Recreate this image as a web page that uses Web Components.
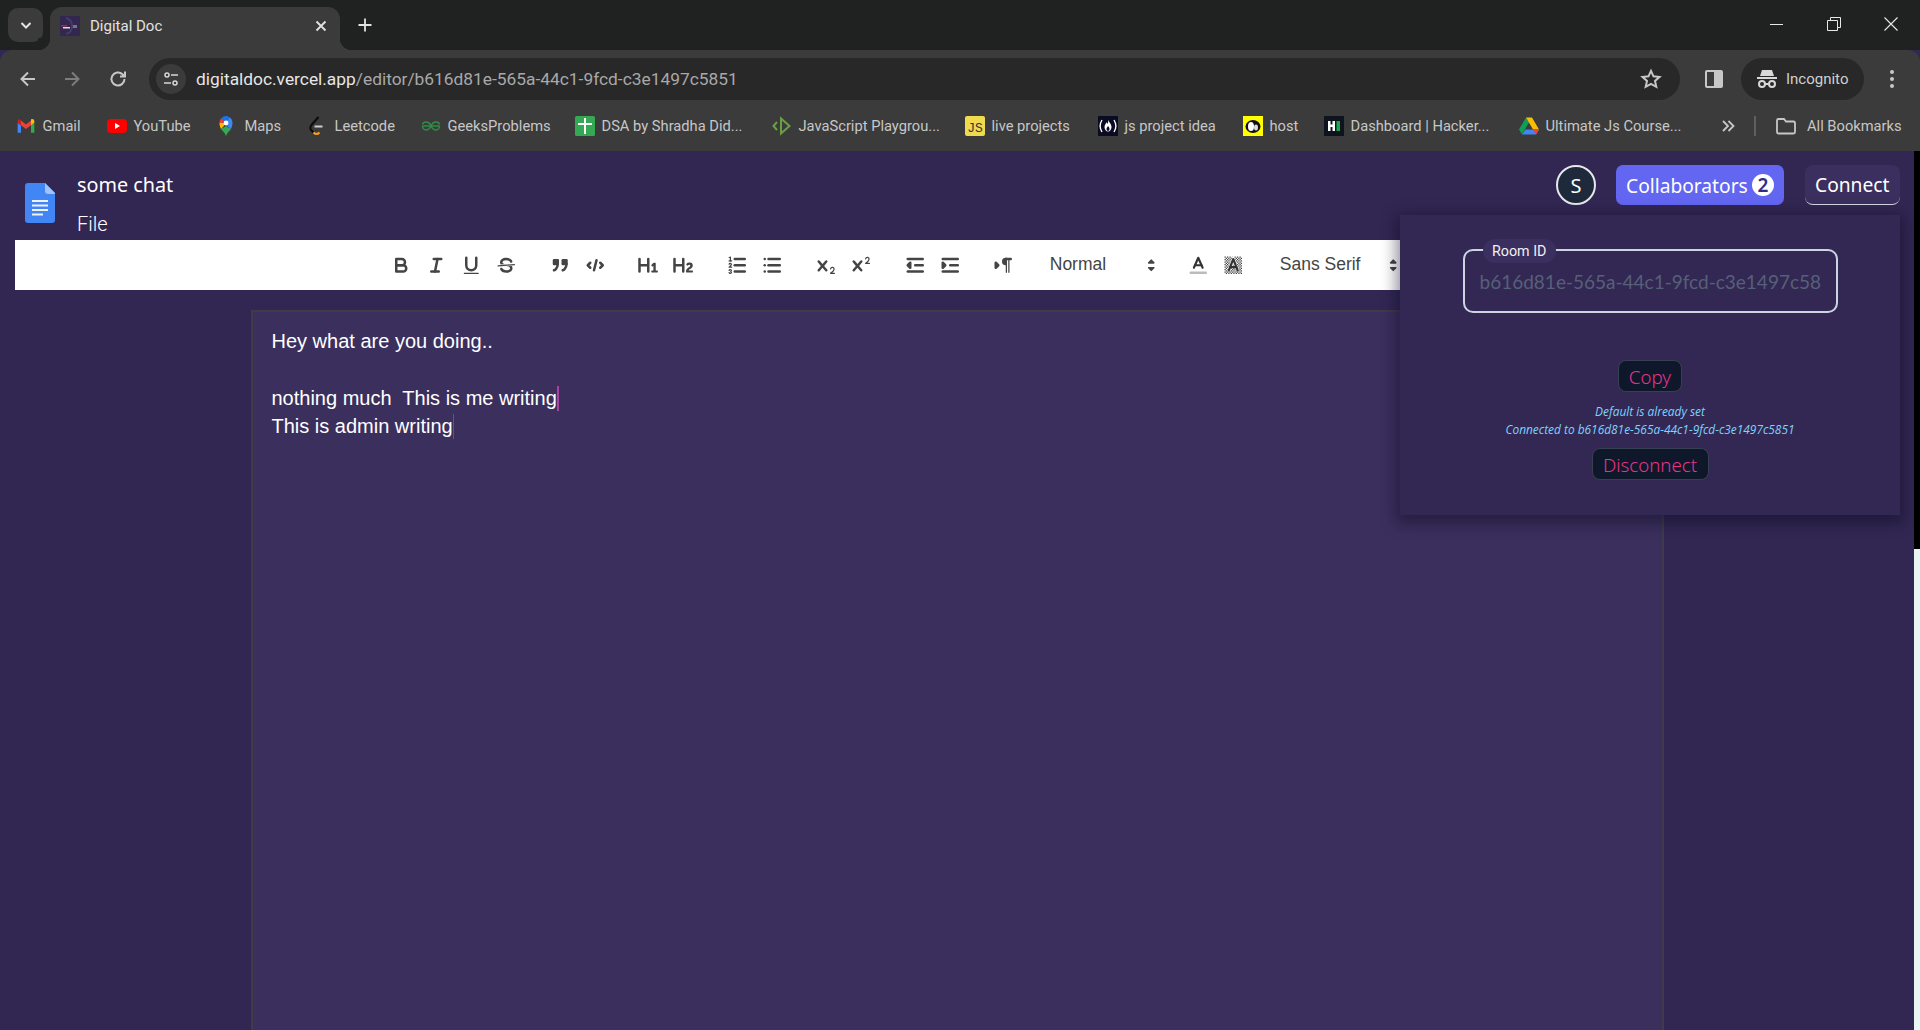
<!DOCTYPE html>
<html lang="en">
<head>
<meta charset="utf-8">
<title>Digital Doc</title>
<style>
  html, body { margin: 0; height: 100%; overflow: hidden; background: #322753; }
  body { display: flex; flex-direction: column; font-family: Roboto, "Liberation Sans", sans-serif; }
</style>
</head>
<body>
<browser-tabs></browser-tabs>
<browser-bar url-host="digitaldoc.vercel.app" url-path="/editor/b616d81e-565a-44c1-9fcd-c3e1497c5851"></browser-bar>
<bookmark-bar>
  <bookmark-item w="91"><svg slot="icon" viewBox="0 0 24 24" width="20" height="20"><path fill="#4285f4" d="M2 20h4v-9L2 8z"/><path fill="#34a853" d="M18 20h4V8l-4 3z"/><path fill="#fbbc04" d="M18 6v5l4-3V6.300c0-2.300-2.500-3.300-4-2.100z"/><path fill="#ea4335" d="M6 11V5.500l6 4.700 6-4.700V11l-6 4.700z"/><path fill="#c5221f" d="M2 6.300V8l4 3V5.500l-1-1.200C3.700 3.200 2 4.200 2 6.300z"/></svg>Gmail</bookmark-item>
  <bookmark-item w="111"><svg slot="icon" viewBox="0 0 20 20" width="20" height="20"><rect x="0" y="3" width="20" height="14" rx="4" fill="#f00"/><path fill="#fff" d="M8 7l5 3-5 3z"/></svg>YouTube</bookmark-item>
  <bookmark-item w="90"><svg slot="icon" viewBox="2 0 20 20" width="20" height="20"><path fill="#34a853" d="M5 13c2 2.500 4 4 5 7 1-3 3-4.500 5-7l-5-3z"/><path fill="#fbbc04" d="M3.500 7c0 2.500.7 4 1.500 6l5.500-6z"/><path fill="#ea4335" d="M5 2.500C4 3.700 3.500 5.300 3.500 7l3.200 0L9 5z"/><path fill="#1a73e8" d="M5 2.500C6.200 1 8 0 10 0c1.500 0 3 .6 4 1.500L9 6z"/><path fill="#4285f4" d="M14 1.500c1.600 1.300 2.500 3.300 2.500 5.500 0 2.300-.7 4-1.500 6L8 7.500z"/><circle cx="10" cy="7" r="2.400" fill="#fff"/></svg>Maps</bookmark-item>
  <bookmark-item w="113"><svg slot="icon" viewBox="1.500 0 20 20" width="20" height="20"><path fill="none" stroke="#0b0b0b" stroke-width="2" d="M12 1L5 9c-1.500 2 -1.500 4 0 5.500l2 2"/><path fill="none" stroke="#f89f1b" stroke-width="2" d="M7 16.500c1.800 1.800 4.200 1.800 6 0"/><path fill="none" stroke="#cfcfcf" stroke-width="2" d="M8 10.500h8"/></svg>Leetcode</bookmark-item>
  <bookmark-item w="154"><svg slot="icon" viewBox="0 0 20 20" width="20" height="20"><g fill="none" stroke="#2f8d46" stroke-width="1.500"><path d="M1.500 10h17"/><path d="M10 10C9 7.500 7 6 5 6 3 6 1.800 7.200 1.500 8.500"/><path d="M10 10c1-2.500 3-4 5-4 2 0 3.200 1.200 3.500 2.500"/><path d="M1.500 10c0 2.200 1.500 4 3.500 4 2 0 3.500-1 5-4"/><path d="M18.500 10c0 2.200-1.500 4-3.500 4-2 0-3.500-1-5-4"/></g></svg>GeeksProblems</bookmark-item>
  <bookmark-item w="197"><svg slot="icon" viewBox="0 0 20 20" width="20" height="20"><rect width="20" height="20" rx="1.500" fill="#34a853"/><path fill="#fff" d="M9 2h2v5h6v2h-6v9H9V9H3V7h6z"/></svg>DSA by Shradha Did...</bookmark-item>
  <bookmark-item w="193"><svg slot="icon" viewBox="0 0 20 20" width="20" height="20"><g fill="none" stroke="#6a9f45" stroke-width="2"><path d="M5 6L1.500 10 5 14"/><path d="M9 2.500L17.500 10 9 17.500z"/></g></svg>JavaScript Playgrou...</bookmark-item>
  <bookmark-item w="133"><svg slot="icon" viewBox="0 0 20 20" width="20" height="20"><rect width="20" height="20" rx="2" fill="#f0db4f"/><text x="10" y="15.500" text-anchor="middle" font-family="Liberation Mono" font-size="13" fill="#323330">JS</text></svg>live projects</bookmark-item>
  <bookmark-item w="145"><svg slot="icon" viewBox="0 0 20 20" width="20" height="20"><rect width="20" height="20" fill="#0a0a23"/><g fill="none" stroke="#fff" stroke-width="1.400"><path d="M4 4C1.800 7.500 1.800 12.500 4 16"/><path d="M16 4c2.200 3.500 2.200 8.500 0 12"/></g><path fill="#fff" d="M10 3.500c.3 2.200 3.500 4 3.500 7.500 0 2.500-1.700 4.500-3.500 4.500s-3.500-2-3.500-4.500c0-2.500 1.700-3.200 2-4.800.5.500 1 1 .9 1.800C10.200 7 10.300 5.500 10 3.500z"/><path fill="#0a0a23" d="M10 10c1 1 1.500 2 1.500 3s-.8 2-1.500 2-1.500-1-1.500-2 1-2 1.500-3z"/></svg>js project idea</bookmark-item>
  <bookmark-item w="81"><svg slot="icon" viewBox="0 0 20 20" width="20" height="20"><rect width="20" height="20" fill="#ff0"/><ellipse cx="10" cy="10.500" rx="7.500" ry="6.500" fill="#111"/><ellipse cx="8" cy="10.500" rx="3" ry="4.500" fill="#fff"/><ellipse cx="13" cy="11.500" rx="2" ry="3" fill="#ddd"/></svg>host</bookmark-item>
  <bookmark-item w="195"><svg slot="icon" viewBox="0 0 20 20" width="20" height="20"><rect width="20" height="20" fill="#0e141e"/><path fill="#fff" d="M4 5h2.500v3.500h2V5H11v10H8.500v-4h-2v4H4z"/><rect x="12.500" y="5" width="3.500" height="10" fill="#1ba94c"/></svg>Dashboard | Hacker...</bookmark-item>
  <bookmark-item w="201"><svg slot="icon" viewBox="0 0 20 20" width="20" height="20"><path fill="#0f9d58" d="M7 1.500L0 13.500l3 5 7-12z"/><path fill="#fbbc04" d="M7 1.500h6l7 12h-6z"/><path fill="#4285f4" d="M3 18.500h14l3-5H6.500z"/><path fill="#ea4335" d="M17 18.500l3-5h-6z"/></svg>Ultimate Js Course...</bookmark-item>
  <bookmark-end></bookmark-end>
</bookmark-bar>
<app-shell>
  <doc-header title-text="some chat"></doc-header>
  <quill-bar></quill-bar>
  <doc-editor>
    <div>Hey what are you doing..</div>
    <div>&nbsp;</div>
    <div>nothing much&nbsp; This is me writing<remote-caret color="#a9419f"></remote-caret></div>
    <div>This is admin writing<remote-caret color="#1f6f9f" thin></remote-caret></div>
  </doc-editor>
  <room-panel room="b616d81e-565a-44c1-9fcd-c3e1497c5851"></room-panel>
</app-shell>

<script>
// the speckled box behind the background-colour icon, same 1x1 checker quill draws
let bgSquares = '';
for (let y = 2; y < 16; y++) {
  for (let x = 2; x < 16; x++) {
    if ((x + y) % 2 === 0) bgSquares += `<rect class="f" x="${x}" y="${y}" width="1" height="1"/>`;
  }
}

// quill's snow icons, 18x18 viewbox. keyed by toolbar button name
const QL_ICONS = {
  bold: '<path class="s" d="M5,4H9.5A2.5,2.5,0,0,1,12,6.5v0A2.5,2.5,0,0,1,9.5,9H5A0,0,0,0,1,5,9V4A0,0,0,0,1,5,4Z"/><path class="s" d="M5,9h5.5A2.5,2.5,0,0,1,13,11.5v0A2.500,2.500,0,0,1,10.500,14H5a0,0,0,0,1,0,0V9A0,0,0,0,1,5,9Z"/>',
  italic: '<line class="s" x1="7" x2="13" y1="4" y2="4"/><line class="s" x1="5" x2="11" y1="14" y2="14"/><line class="s" x1="8" x2="10" y1="14" y2="4"/>',
  underline: '<path class="s" d="M5,3V9a4.012,4.012,0,0,0,4,4H9a4.012,4.012,0,0,0,4-4V3"/><rect class="f" height="1" rx=".5" ry=".5" width="12" x="3" y="15"/>',
  strike: '<line class="s t" x1="15.5" x2="2.5" y1="8.5" y2="9.5"/><path class="f" d="M9.007,8C6.542,7.791,6,7.519,6,6.5,6,5.792,7.283,5,9,5c1.571,0,2.765.679,2.969,1.309a1,1,0,0,0,1.900-.617C13.356,4.106,11.354,3,9,3,6.200,3,4,4.538,4,6.500a3.200,3.200,0,0,0,.5,1.843Z"/><path class="f" d="M8.984,10C11.457,10.208,12,10.479,12,11.500c0,.708-1.283,1.500-3,1.500-1.571,0-2.765-.679-2.969-1.309a1,1,0,1,0-1.900.617C4.644,13.894,6.646,15,9,15c2.800,0,5-1.538,5-3.500a3.200,3.200,0,0,0-.5-1.843Z"/>',
  quote: '<rect class="f s" height="3" width="3" x="4" y="5"/><rect class="f s" height="3" width="3" x="11" y="5"/><path class="f s" fill-rule="evenodd" d="M7,8c0,4.031-3,5-3,5"/><path class="f s" fill-rule="evenodd" d="M14,8c0,4.031-3,5-3,5"/>',
  code: '<polyline class="s" points="5 7 3 9 5 11"/><polyline class="s" points="13 7 15 9 13 11"/><line class="s" x1="10" x2="8" y1="5" y2="13"/>',
  h1: '<path class="f" d="M10,4V14a1,1,0,0,1-2,0V10H3v4a1,1,0,0,1-2,0V4A1,1,0,0,1,3,4V8H8V4a1,1,0,0,1,2,0Zm6.06787,9.209H14.98975V7.59863a.54085.54085,0,0,0-.605-.60547h-.62744a1.01119,1.01119,0,0,0-.748.29688L11.645,8.56641a.5435.5435,0,0,0-.022.8584l.28613.30762a.53861.53861,0,0,0,.84717.0332l.09912-.08789a1.2137,1.2137,0,0,0,.2417-.35254h.02246s-.01123.30859-.01123.60547V13.209H12.041a.54085.54085,0,0,0-.605.60547v.43945a.54085.54085,0,0,0,.605.60547h4.02686a.54085.54085,0,0,0,.605-.60547v-.43945A.54085.54085,0,0,0,16.06787,13.209Z"/>',
  h2: '<path class="f" d="M16.73975,13.81445v.43945a.54085.54085,0,0,1-.605.60547H11.855a.58392.58392,0,0,1-.64893-.60547V14.0127c0-2.90527,3.39941-3.42187,3.39941-4.55469a.77675.77675,0,0,0-.84717-.78125,1.17684,1.17684,0,0,0-.83594.38477c-.2749.26367-.561.374-.85791.13184l-.4292-.34082c-.30811-.24219-.38525-.51758-.1543-.81445a2.97155,2.97155,0,0,1,2.45361-1.17676,2.45393,2.45393,0,0,1,2.68408,2.40918c0,2.45312-3.1792,2.92676-3.27832,3.93848h2.79443A.54085.54085,0,0,1,16.73975,13.81445ZM9,3A.99974.99974,0,0,0,8,4V8H3V4A1,1,0,0,0,1,4V14a1,1,0,0,0,2,0V10H8v4a1,1,0,0,0,2,0V4A.99974.99974,0,0,0,9,3Z"/>',
  ol: '<line class="s" x1="7" x2="15" y1="4" y2="4"/><line class="s" x1="7" x2="15" y1="9" y2="9"/><line class="s" x1="7" x2="15" y1="14" y2="14"/><line class="s t" x1="2.5" x2="4.5" y1="5.5" y2="5.5"/><path class="f" d="M3.5,6A.5.5,0,0,1,3,5.5V3.085l-.276.138A.5.5,0,0,1,2.053,3c-.124-.247-.023-.324.224-.447l1-.5A.5.5,0,0,1,4,2.500v3A.5.5,0,0,1,3.5,6Z"/><path class="s t" d="M4.5,10.500h-2c0-.234,1.850-1.076,1.850-2.234A.959.959,0,0,0,2.500,8.156"/><path class="s t" d="M2.500,14.846a.959.959,0,0,0,1.850-.109A.7.7,0,0,0,3.750,14a.688.688,0,0,0,.6-.736.959.959,0,0,0-1.850-.109"/>',
  ul: '<line class="s" x1="6" x2="15" y1="4" y2="4"/><line class="s" x1="6" x2="15" y1="9" y2="9"/><line class="s" x1="6" x2="15" y1="14" y2="14"/><line class="s" x1="3" x2="3" y1="4" y2="4"/><line class="s" x1="3" x2="3" y1="9" y2="9"/><line class="s" x1="3" x2="3" y1="14" y2="14"/>',
  sub: '<path class="f" d="M15.5,15H13.861a3.858,3.858,0,0,0,1.914-2.975,1.800,1.800,0,0,0-1.600-1.751A1.921,1.921,0,0,0,12.021,11.700a0.500,0.500,0,1,0,.957.291h0a0.914,0.914,0,0,1,1.053-.725,0.810,0.810,0,0,1,.744.762c0,1.076-1.170,1.870-1.940,2.431A1.456,1.456,0,0,0,12,15.500a0.500,0.500,0,0,0,.5.5h3A0.500,0.500,0,0,0,15.500,15Z"/><path class="f" d="M9.650,5.241a1,1,0,0,0-1.409.108L6,7.964,3.759,5.349A1,1,0,0,0,2.192,6.592Q2.215,6.621,2.241,6.649L4.684,9.500,2.241,12.350A1,1,0,0,0,3.710,13.707q0.026-.028.049-0.057L6,11.036,8.241,13.650a1,1,0,1,0,1.567-1.243Q9.785,12.378,9.759,12.350L7.316,9.500,9.759,6.651A1,1,0,0,0,9.650,5.241Z"/>',
  sup: '<path class="f" d="M15.500,7H13.861a4.015,4.015,0,0,0,1.914-2.975,1.800,1.800,0,0,0-1.600-1.751A1.922,1.922,0,0,0,12.021,3.700a0.500,0.500,0,1,0,.957.291,0.917,0.917,0,0,1,1.053-.725,0.810,0.810,0,0,1,.744.762c0,1.077-1.164,1.925-1.934,2.486A1.423,1.423,0,0,0,12,7.500a0.500,0.500,0,0,0,.5.5h3A0.500,0.500,0,0,0,15.500,7Z"/><path class="f" d="M9.651,5.241a1,1,0,0,0-1.410.108L6,7.964,3.759,5.349a1,1,0,1,0-1.519,1.300L4.683,9.500,2.241,12.350a1,1,0,1,0,1.519,1.300L6,11.036,8.241,13.650a1,1,0,0,0,1.519-1.300L7.317,9.500,9.759,6.651A1,1,0,0,0,9.651,5.241Z"/>',
  outdent: '<line class="s" x1="3" x2="15" y1="14" y2="14"/><line class="s" x1="3" x2="15" y1="4" y2="4"/><line class="s" x1="9" x2="15" y1="9" y2="9"/><polyline class="s" points="5 7 5 11 3 9 5 7"/>',
  indent: '<line class="s" x1="3" x2="15" y1="14" y2="14"/><line class="s" x1="3" x2="15" y1="4" y2="4"/><line class="s" x1="9" x2="15" y1="9" y2="9"/><polyline class="f s" points="3 7 3 11 5 9 3 7"/>',
  direction: '<polygon class="s f" points="3 11 5 9 3 7 3 11"/><line class="s" x1="15" x2="11" y1="4" y2="4"/><path class="f" d="M11,3a3,3,0,0,0,0,6h1V3H11Z"/><rect class="f" height="11" width="1" x="11" y="4"/><rect class="f" height="11" width="1" x="13" y="4"/>',
  color: '<line stroke="#bbb" stroke-width="2" stroke-linecap="round" x1="3" x2="15" y1="15" y2="15"/><polyline class="s a" points="5.5 11 9 3 12.5 11"/><line class="s a" x1="11.63" x2="6.38" y1="9" y2="9"/>',
  background: bgSquares + '<polyline fill="none" stroke="#fff" stroke-width="2.6" points="5.5 13 9 4 12.5 13"/><polyline class="s a" points="5.5 13 9 4 12.5 13"/><line class="s a" x1="11.63" x2="6.38" y1="10.500" y2="10.500"/>',
  arrows: '<polygon class="s t" fill="#444" points="7 11 9 13 11 11 7 11"/><polygon class="s t" fill="#444" points="7 7 9 5 11 7 7 7"/>'
};

class BrowserTabs extends HTMLElement {
  constructor() {
    super();
    this.attachShadow({mode: 'open'});
    this.shadowRoot.innerHTML = `
      <style>
        :host { display: flex; height: 50px; background: #202221; padding-left: 8px; box-sizing: border-box; flex: none; align-items: flex-start; color: #e3e3e3; }
        .list { width: 35px; height: 34px; margin-top: 8px; border-radius: 10px; background: #3b3b3b; display: flex; align-items: center; justify-content: center; }
        .tab { position: relative; width: 290px; height: 43px; margin: 7px 0 0 7px; background: #3b3b3b; border-radius: 12px 12px 0 0; display: flex; align-items: center; padding: 0 12px 6px 10px; box-sizing: border-box; font-size: 15px; }
        .tab::after { content: ""; position: absolute; right: -12px; bottom: 0; width: 12px; height: 12px; background: radial-gradient(circle at 100% 0, #202221 12px, #3b3b3b 12.5px); }
        .tab::before { content: ""; position: absolute; left: -12px; bottom: 0; width: 12px; height: 12px; background: radial-gradient(circle at 0 0, #202221 12px, #3b3b3b 12.5px); }
        .fav { width: 20px; height: 20px; margin-right: 10px; flex: none; }
        .title { flex: 1; }
        .plus { margin: 17px 0 0 17px; }
        .win { margin-left: auto; display: flex; height: 50px; align-items: center; padding-right: 21px; gap: 41px; margin-top: -1px; }
      </style>
      <div class="list"><svg width="14" height="14" viewBox="0 0 14 14"><path d="M2.500 5L7 9.500 11.500 5" fill="none" stroke="#e3e3e3" stroke-width="2"/></svg></div>
      <div class="tab">
        <svg class="fav" viewBox="0 0 20 20"><rect width="20" height="20" fill="#32274f"/><rect x="1" y="9" width="6" height="1.500" fill="#c2185b"/><rect x="3" y="11" width="7" height="1.500" fill="#ddd"/><rect x="12" y="9" width="5" height="3" fill="#777"/><path d="M6 2c4 1 6 4 6 8s-2 7-6 8" fill="none" stroke="#453a6b" stroke-width="2"/></svg>
        <span class="title">Digital Doc</span>
        <svg width="14" height="14" viewBox="0 0 14 14"><path d="M2.500 2.500l9 9m0-9l-9 9" stroke="#e3e3e3" stroke-width="1.800" fill="none"/></svg>
      </div>
      <svg class="plus" width="16" height="16" viewBox="0 0 16 16"><path d="M8 1.500v13M1.500 8h13" stroke="#e3e3e3" stroke-width="1.800" fill="none"/></svg>
      <div class="win">
        <svg width="16" height="16" viewBox="0 0 16 16"><path d="M1 8.500h13" stroke="#e8e8e8" stroke-width="1"/></svg>
        <svg width="16" height="16" viewBox="0 0 16 16"><path d="M1.500 4.500h10v10h-10z M4.500 4.500v-3h10v10h-3" fill="none" stroke="#e8e8e8"/></svg>
        <svg width="16" height="16" viewBox="0 0 16 16"><path d="M1.500 1.500l13 13m0-13l-13 13" stroke="#e8e8e8" stroke-width="1.100" fill="none"/></svg>
      </div>
    `;
  }
}
customElements.define('browser-tabs', BrowserTabs);

class BrowserBar extends HTMLElement {
  constructor() {
    super();
    this.attachShadow({mode: 'open'});
    this.shadowRoot.innerHTML = `
      <style>
        :host { display: flex; align-items: center; height: 50px; padding-top: 8px; box-sizing: border-box; background: #3b3b3b; border-radius: 12px 12px 0 0; flex: none; color: #c7c7c7; }
        .nav { width: 22px; height: 22px; flex: none; }
        .omni { width: 1531px; height: 42px; margin-left: 20px; border-radius: 21px; background: #282828; display: flex; align-items: center; box-sizing: border-box; padding: 0 18px 0 7px; flex: none; }
        .site { width: 30px; height: 30px; border-radius: 50%; background: #3b3b3b; display: flex; align-items: center; justify-content: center; flex: none; margin-right: 10px; }
        .url { flex: 1; font-size: 17.35px; color: #a8a8a8; white-space: nowrap; }
        .url b { font-weight: 400; color: #e6e6e6; }
        .pill { width: 123px; height: 42px; margin-left: 17px; border-radius: 21px; background: #282828; display: flex; align-items: center; padding-left: 16px; box-sizing: border-box; font-size: 15px; color: #d0d0d0; flex: none; }
        .pill svg { margin-right: 9px; }
      </style>
      <svg class="nav" style="margin-left:17px" viewBox="0 0 22 22"><path d="M18 11H5m6-6.500L4.500 11l6.500 6.500" fill="none" stroke="#c7c7c7" stroke-width="2"/></svg>
      <svg class="nav" style="margin-left:22px" viewBox="0 0 22 22"><path d="M4 11h13m-6-6.500l6.500 6.500-6.500 6.500" fill="none" stroke="#7d7d7d" stroke-width="2"/></svg>
      <svg class="nav" style="margin-left:24px" viewBox="0 0 22 22"><path d="M17.500 11a6.500 6.500 0 1 1-2-4.700L18 8.500M18 3.500v5h-5" fill="none" stroke="#c7c7c7" stroke-width="2"/></svg>
      <div class="omni">
        <div class="site"><svg width="18" height="18" viewBox="0 0 18 18"><g fill="none" stroke="#d8d8d8" stroke-width="1.500"><circle cx="5" cy="5" r="2"/><path d="M9 5h7M2 13h7"/><circle cx="13" cy="13" r="2"/></g></svg></div>
        <div class="url"><b>${this.getAttribute('url-host') || ''}</b>${this.getAttribute('url-path') || ''}</div>
        <svg width="22" height="22" viewBox="0 0 22 22"><path d="M11 2.800l2.500 5.500 6 .6-4.500 4 1.300 5.900-5.300-3-5.300 3L7 12.900l-4.500-4 6-.6z" fill="none" stroke="#c7c7c7" stroke-width="2"/></svg>
      </div>
      <svg style="margin-left:24px;flex:none" width="20" height="22" viewBox="0 0 20 22"><rect x="1" y="2" width="18" height="18" rx="2" fill="#c7c7c7"/><rect x="3" y="4" width="7" height="14" fill="#3b3b3b"/></svg>
      <div class="pill">
        <svg width="20" height="22" viewBox="0 0 20 22"><path fill="#d8d8d8" d="M5 2h10l2 6H3zM0 9h20v2H0z"/><g fill="none" stroke="#d8d8d8" stroke-width="2"><circle cx="5" cy="16" r="3"/><circle cx="15" cy="16" r="3"/><path d="M8 16h4"/></g></svg>Incognito
      </div>
      <svg style="margin-left:19px;flex:none" width="18" height="22" viewBox="0 0 18 22"><g fill="#c7c7c7"><circle cx="9" cy="4" r="2"/><circle cx="9" cy="11" r="2"/><circle cx="9" cy="18" r="2"/></g></svg>
    `;
  }
}
customElements.define('browser-bar', BrowserBar);

class BookmarkBar extends HTMLElement {
  constructor() {
    super();
    this.attachShadow({mode: 'open'});
    this.shadowRoot.innerHTML = `
      <style>
        :host { display: flex; align-items: center; height: 51px; padding: 0 0 0 16px; box-sizing: border-box; background: #3b3b3b; flex: none; }
      </style>
      <slot></slot>
    `;
  }
}
customElements.define('bookmark-bar', BookmarkBar);

class BookmarkItem extends HTMLElement {
  constructor() {
    super();
    this.attachShadow({mode: 'open'});
    this.shadowRoot.innerHTML = `
      <style>
        :host { display: flex; align-items: center; gap: 6.5px; flex: none; font-size: 14.7px; color: #c7c7c7; white-space: nowrap; }
        ::slotted(svg) { flex: none; }
      </style>
      <slot name="icon"></slot><slot></slot>
    `;
  }
  connectedCallback() {
    this.style.width = this.getAttribute('w') + 'px';
  }
}
customElements.define('bookmark-item', BookmarkItem);

class BookmarkEnd extends HTMLElement {
  constructor() {
    super();
    this.attachShadow({mode: 'open'});
    this.shadowRoot.innerHTML = `
      <style>
        :host { display: flex; align-items: center; flex: 1; font-size: 14.7px; color: #c7c7c7; white-space: nowrap; }
        .more { margin-left: 0; flex: none; }
        .sep { width: 2px; height: 20px; background: #5f5f5f; margin: 0 20px 0 18px; }
        .folder { margin-right: 11px; flex: none; }
      </style>
      <svg class="more" width="16" height="16" viewBox="0 0 16 16"><path d="M3 3l5 5-5 5M8.500 3l5 5-5 5" fill="none" stroke="#c7c7c7" stroke-width="1.800"/></svg>
      <div class="sep"></div>
      <svg class="folder" width="20" height="18" viewBox="0 0 20 18"><path d="M1 3.500A1.500 1.500 0 0 1 2.500 2H8l2 2.500h7.500A1.500 1.500 0 0 1 19 6v9a1.500 1.500 0 0 1-1.500 1.500h-15A1.500 1.500 0 0 1 1 15z" fill="none" stroke="#c7c7c7" stroke-width="1.800"/></svg>
      All Bookmarks
    `;
  }
}
customElements.define('bookmark-end', BookmarkEnd);

class AppShell extends HTMLElement {
  constructor() {
    super();
    this.attachShadow({mode: 'open'});
    this.shadowRoot.innerHTML = `
      <style>
        :host { display: flex; flex: 1; min-height: 0; position: relative; background: #322753; }
        main { flex: 1; min-width: 0; display: flex; flex-direction: column; }
        .scroll { width: 6px; flex: none; display: flex; flex-direction: column; }
        .track { height: 398px; background: #000; }
        .thumb { flex: 1; background: #e9f6f6; }
      </style>
      <main><slot></slot></main>
      <div class="scroll"><div class="track"></div><div class="thumb"></div></div>
    `;
  }
}
customElements.define('app-shell', AppShell);

class DocHeader extends HTMLElement {
  constructor() {
    super();
    this.attachShadow({mode: 'open'});
    this.shadowRoot.innerHTML = `
      <style>
        :host { display: flex; height: 89px; flex: none; padding: 0 14.5px 0 25px; box-sizing: border-box; color: #fff; font-family: "Noto Sans", Roboto, sans-serif; }
        .logo { margin-top: 32px; flex: none; }
        .names { margin-left: 22px; display: flex; flex-direction: column; padding-top: 20px; }
        .title { font-size: 19.8px; line-height: 28px; }
        .file { font-size: 20px; line-height: 28px; margin-top: 11px; font-family: Roboto, sans-serif; font-weight: 300; }
        .actions { margin-left: auto; display: flex; align-items: center; height: 40px; margin-top: 14px; }
        .avatar { width: 40px; height: 40px; border-radius: 50%; background: #1e293b; border: 2px solid #e5e7eb; box-sizing: border-box; display: flex; align-items: center; justify-content: center; font-size: 20px; margin-right: 20px; }
        .collab { width: 168px; height: 40px; border-radius: 7px; background: #6366f1; display: flex; align-items: center; padding: 0 10px; box-sizing: border-box; font-size: 19.2px; margin-right: 21px; }
        .badge { width: 22px; height: 22px; border-radius: 50%; background: #fff; color: #312e81; font-size: 19px; font-weight: 600; display: flex; align-items: center; justify-content: center; margin-left: auto; }
        .connect { width: 94.5px; height: 40px; border-radius: 8px; background: #3b2f5f; border-bottom: 1px solid #d8d8e4; box-sizing: border-box; display: flex; align-items: center; justify-content: center; font-size: 19.2px; }
      </style>
      <svg class="logo" width="30" height="40" viewBox="0 0 30 40">
        <path fill="#4285f4" d="M3 0h17l10 10v27a3 3 0 0 1-3 3H3a3 3 0 0 1-3-3V3a3 3 0 0 1 3-3z"/>
        <path fill="#a1c2fa" d="M20 0l10 10v1h-7a3 3 0 0 1-3-3z"/>
        <g fill="#f1f1f1"><rect x="7" y="17" width="16" height="2"/><rect x="7" y="21.500" width="16" height="2"/><rect x="7" y="26" width="16" height="2"/><rect x="7" y="30.500" width="11" height="2"/></g>
      </svg>
      <div class="names"><div class="title">${this.getAttribute('title-text')}</div><div class="file">File</div></div>
      <div class="actions">
        <div class="avatar">S</div>
        <div class="collab">Collaborators<span class="badge">2</span></div>
        <div class="connect">Connect</div>
      </div>
    `;
  }
}
customElements.define('doc-header', DocHeader);

class QlIcon extends HTMLElement {
  constructor() {
    super();
    this.attachShadow({mode: 'open'});
  }
  connectedCallback() {
    this.shadowRoot.innerHTML = `
      <style>
        :host { display: flex; width: 35px; height: 30px; align-items: center; justify-content: center; flex: none; }
        svg { width: 22.5px; height: 22.5px; display: block; }
        .s { stroke: #444; stroke-width: 2; stroke-linecap: round; stroke-linejoin: round; fill: none; }
        .t { stroke-width: 1; }
        .a { stroke-width: 1.7; stroke: #333; }
        .f { fill: #444; }
      </style>
      <svg viewBox="0 0 18 18">${QL_ICONS[this.getAttribute('name')]}</svg>
    `;
  }
}
customElements.define('ql-icon', QlIcon);

class QlPicker extends HTMLElement {
  constructor() {
    super();
    this.attachShadow({mode: 'open'});
  }
  connectedCallback() {
    this.shadowRoot.innerHTML = `
      <style>
        :host { display: flex; height: 30px; align-items: center; justify-content: space-between; padding-left: 10px; box-sizing: border-box; flex: none; color: #444; font-size: 17.5px; }
        span { position: relative; top: -1px; }
        svg { width: 22.5px; height: 22.5px; }
        .s { stroke: #444; stroke-linejoin: round; stroke-linecap: round; stroke-width: 1.4; }
      </style>
      <span><slot></slot></span>
      <svg viewBox="0 0 18 18">${QL_ICONS.arrows.replace(/class="s t"/g, 'class="s"')}</svg>
    `;
    this.style.width = this.getAttribute('w') + 'px';
  }
}
customElements.define('ql-picker', QlPicker);

class QuillBar extends HTMLElement {
  constructor() {
    super();
    this.attachShadow({mode: 'open'});
    const groups = [
      ['bold', 'italic', 'underline', 'strike'], ['quote', 'code'], ['h1', 'h2'], ['ol', 'ul'],
      ['sub', 'sup'], ['outdent', 'indent'], ['direction']
    ];
    const btns = groups.map(g => `<div class="grp">${g.map(n => `<ql-icon name="${n}"></ql-icon>`).join('')}</div>`).join('');
    this.shadowRoot.innerHTML = `
      <style>
        :host { display: flex; justify-content: center; width: 1777px; height: 50px; margin-left: 15px; padding: 10px; box-sizing: border-box; background: #fff; flex: none; font-family: "Liberation Sans", sans-serif; }
        .grp { display: flex; margin-right: 18.75px; flex: none; }
      </style>
      ${btns}
      <div class="grp"><ql-picker w="122.5">Normal</ql-picker></div>
      <div class="grp"><ql-icon name="color"></ql-icon><ql-icon name="background"></ql-icon></div>
      <div class="grp"><ql-picker w="135">Sans Serif</ql-picker></div>
    `;
  }
}
customElements.define('quill-bar', QuillBar);

class DocEditor extends HTMLElement {
  constructor() {
    super();
    this.attachShadow({mode: 'open'});
    this.shadowRoot.innerHTML = `
      <style>
        :host { display: block; flex: 1; width: 1413px; margin: 20px auto 0; box-sizing: border-box; background: #3b2f5e; border: solid #3e3c48; border-width: 2px 2px 0 2px; padding: 15px 19px; color: #fff; font: 20px/28.4px "Liberation Sans", Arial, sans-serif; }
      </style>
      <slot></slot>
    `;
  }
}
customElements.define('doc-editor', DocEditor);

class RemoteCaret extends HTMLElement {
  constructor() {
    super();
    this.attachShadow({mode: 'open'});
  }
  connectedCallback() {
    const w = this.hasAttribute('thin') ? 1 : 2;
    this.shadowRoot.innerHTML = `
      <style>
        :host { display: inline-block; width: ${w}px; height: 25px; background: ${this.getAttribute('color')}; vertical-align: -6px; }
      </style>
    `;
  }
}
customElements.define('remote-caret', RemoteCaret);

class RoomPanel extends HTMLElement {
  constructor() {
    super();
    this.attachShadow({mode: 'open'});
  }
  connectedCallback() {
    const room = this.getAttribute('room');
    this.shadowRoot.innerHTML = `
      <style>
        :host { position: absolute; top: 64px; right: 20px; width: 500px; height: 300px; background: #332854; box-shadow: 0 4px 14px 4px rgba(12, 8, 30, .45); display: flex; flex-direction: column; align-items: center; box-sizing: border-box; padding-top: 34px; z-index: 2; font-family: "Noto Sans", sans-serif; }
        .field { position: relative; width: 375px; height: 64px; border: 2px solid #cbd5e1; border-radius: 10px; box-sizing: border-box; display: flex; align-items: center; padding: 0 15px; }
        .legend { position: absolute; left: 18px; top: -12px; height: 24px; padding: 0 9.5px; border-radius: 12px; background: #3b2f5f; color: #f1f1f1; font: 14.3px/24px Roboto, sans-serif; }
        .val { white-space: nowrap; color: #566078; font: 19px Lato, sans-serif; }
        .btn { height: 32px; border: 1px solid #374151; border-radius: 8px; background: #0f172a; color: #e6358a; box-sizing: border-box; display: flex; align-items: center; justify-content: center; font-size: 18.7px; font-weight: 300; }
        .copy { width: 64px; margin-top: 47px; }
        .disc { width: 117px; margin-top: 10px; }
        .note { font: italic 11.9px/18px "Open Sans", sans-serif; color: #7dd3fc; text-align: center; margin-top: 10px; }
      </style>
      <div class="field"><span class="legend">Room ID</span><span class="val">${room.slice(0, 34)}</span></div>
      <div class="btn copy">Copy</div>
      <div class="note">Default is already set<br>Connected to ${room}</div>
      <div class="btn disc">Disconnect</div>
    `;
  }
}
customElements.define('room-panel', RoomPanel);
</script>
</body>
</html>
